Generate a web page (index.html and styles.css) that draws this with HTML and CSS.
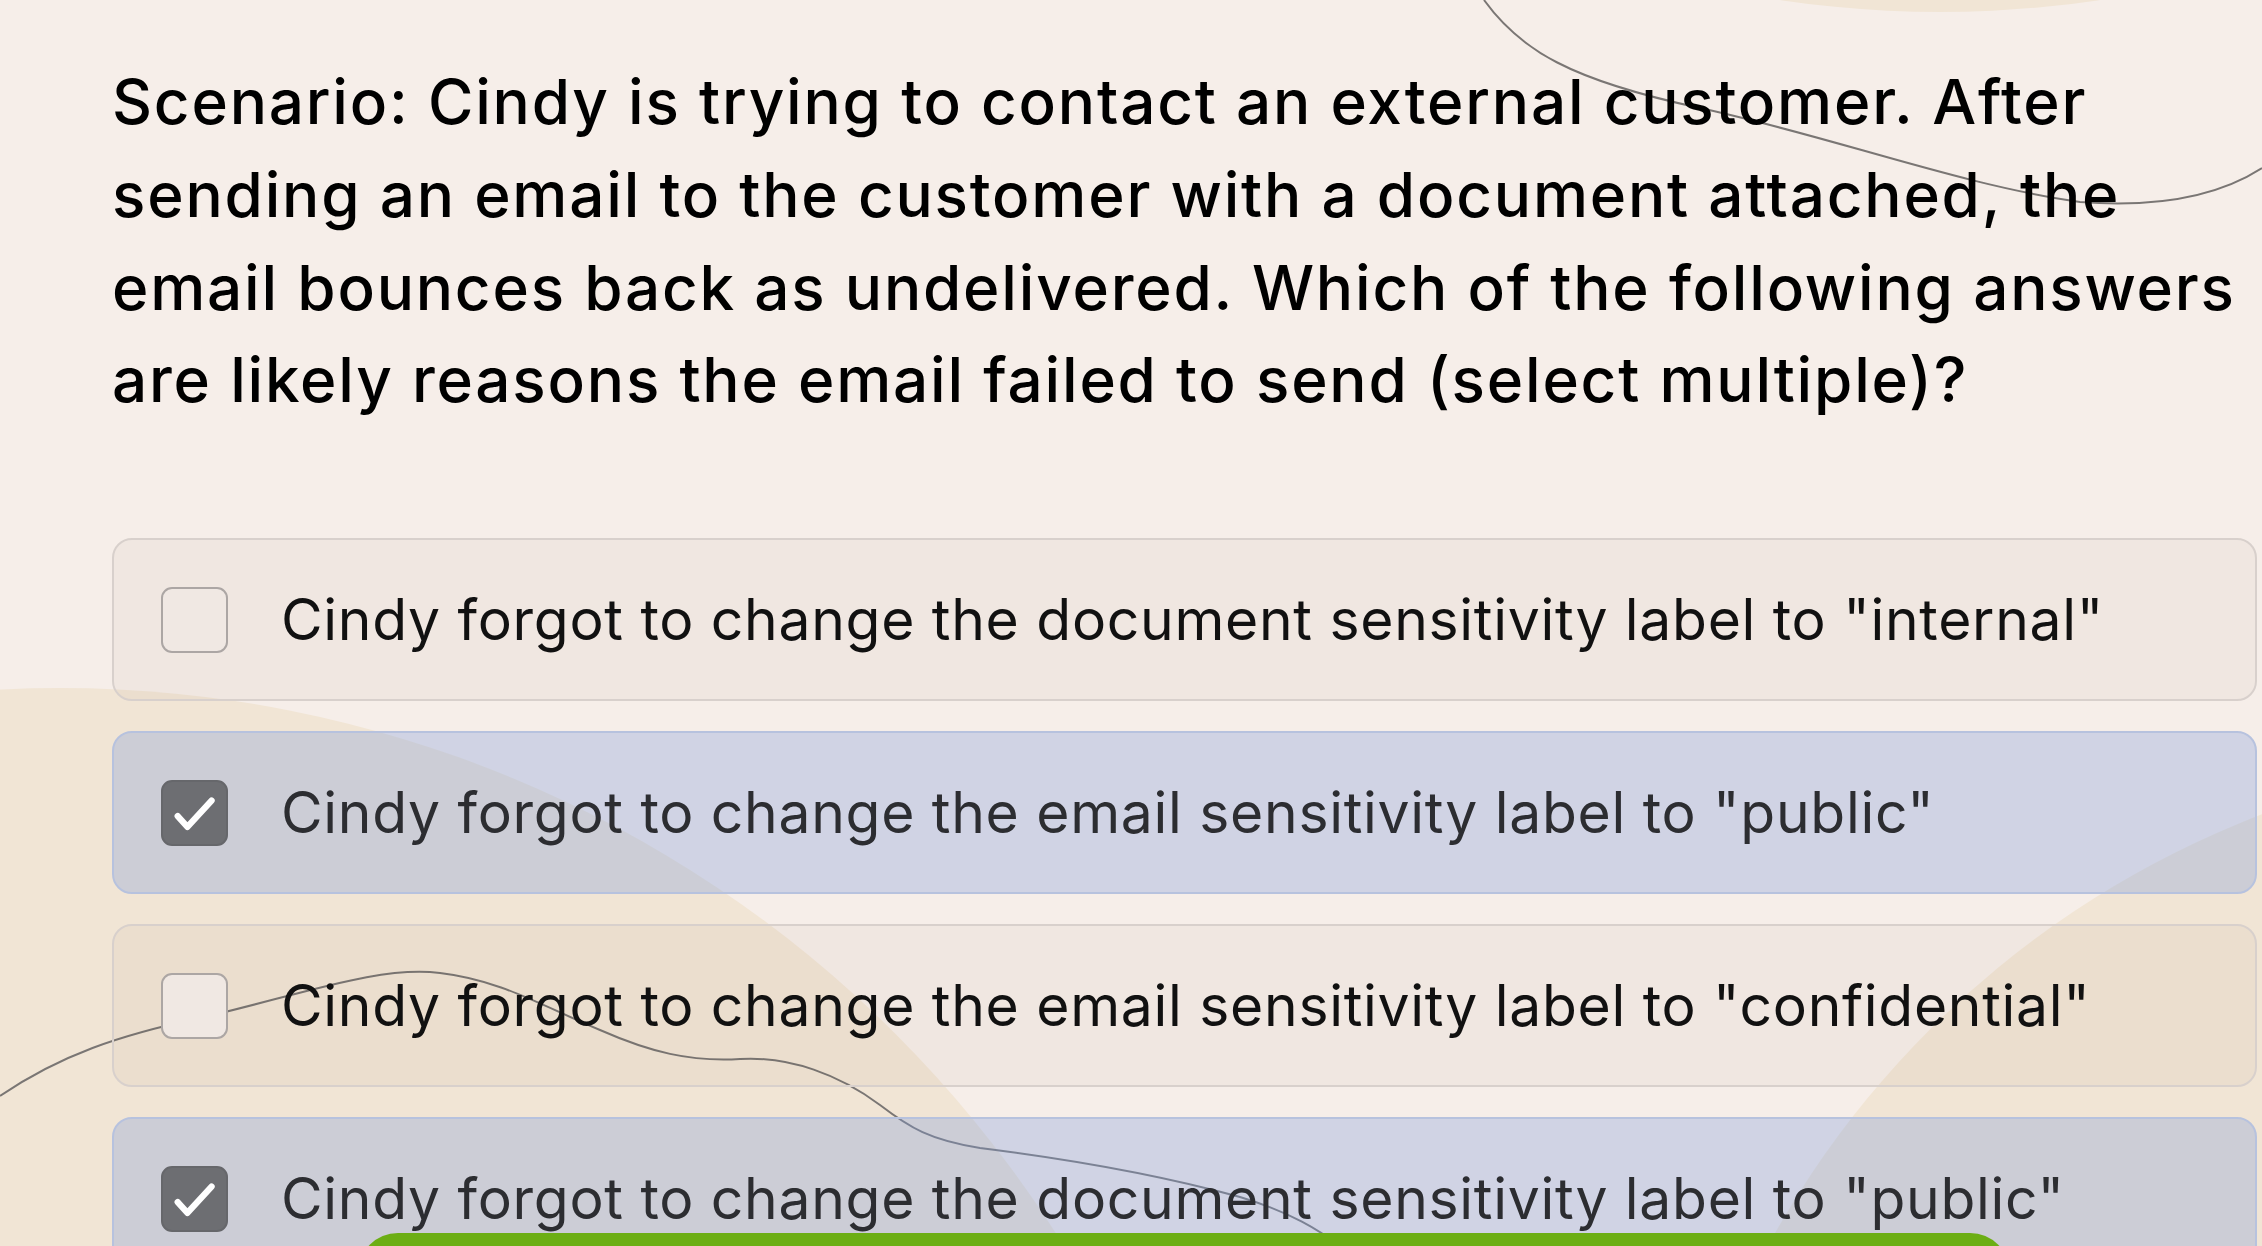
FILE: index.html
```html
<!DOCTYPE html>
<html lang="en">
<head>
<meta charset="utf-8">
<title>Scenario question</title>
<link rel="stylesheet" href="styles.css">
</head>
<body>
<svg class="backdrop" viewBox="0 0 2262 1246" aria-hidden="true">
  <circle class="blob" cx="60" cy="1870" r="1182"/>
  <circle class="blob" cx="2600" cy="1700" r="948"/>
  <circle class="blob" cx="1940" cy="-1061" r="1073"/>
  <path class="wire" d="M1484 0 C1520 50 1570 80 1700 108 C1830 136 1960 185 2080 202 C2160 208 2220 195 2262 168"/>
  <path class="wire" d="M0 1096 C60 1055 120 1035 200 1018 C300 995 380 965 440 973 C500 980 540 1005 600 1030 C650 1052 690 1062 740 1059 C790 1056 840 1075 880 1105 C910 1128 930 1140 980 1148 C1060 1158 1160 1175 1240 1197 C1290 1212 1320 1230 1345 1250"/>
</svg>
<main class="quiz">
  <h1 class="question">Scenario: Cindy is trying to contact an external customer. After sending an email to the customer with a document attached, the email bounces back as undelivered. Which of the following answers are likely reasons the email failed to send (select multiple)?</h1>
  <ul class="options">
    <li class="option">
      <span class="check"></span>
      <span class="label">Cindy forgot to change the document sensitivity label to "internal"</span>
    </li>
    <li class="option checked">
      <span class="check"><svg viewBox="0 0 24 24"><path d="M5.6 13.2 L9.3 17.3 L18.5 7.3"/></svg></span>
      <span class="label">Cindy forgot to change the email sensitivity label to "public"</span>
    </li>
    <li class="option">
      <span class="check"></span>
      <span class="label">Cindy forgot to change the email sensitivity label to "confidential"</span>
    </li>
    <li class="option checked">
      <span class="check"><svg viewBox="0 0 24 24"><path d="M5.6 13.2 L9.3 17.3 L18.5 7.3"/></svg></span>
      <span class="label">Cindy forgot to change the document sensitivity label to "public"</span>
    </li>
  </ul>
</main>
<button class="submit" type="button" aria-label="Submit"></button>
</body>
</html>
```
FILE: styles.css
```css
html, body {
  margin: 0;
  padding: 0;
}
body {
  position: relative;
  width: 2262px;
  height: 1246px;
  overflow: hidden;
  background: #f6eee9;
  font-family: Inter, "Open Sans", "DejaVu Sans", sans-serif;
  color: #000;
}
.backdrop {
  position: absolute;
  left: 0;
  top: 0;
  width: 2262px;
  height: 1246px;
  z-index: 0;
}
.blob {
  fill: #f1e5d5;
}
.wire {
  fill: none;
  stroke: #7a7674;
  stroke-width: 2;
}
.quiz {
  position: relative;
  z-index: 1;
  padding: 56px 5px 0 112px;
}
.question {
  width: 2175px;
  margin: 0;
  font-size: 62px;
  line-height: 92.8px;
  font-weight: 500;
  letter-spacing: 1.8px;
  color: #000;
}
.options {
  list-style: none;
  margin: 111px 0 0;
  padding: 0;
  display: flex;
  flex-direction: column;
  gap: 30px;
}
.option {
  box-sizing: border-box;
  height: 163px;
  display: flex;
  align-items: center;
  gap: 53px;
  padding-left: 47px;
  border: 2px solid #d8d0cc;
  border-radius: 20px;
  background: rgba(90, 50, 40, 0.035);
}
.option.checked {
  background: rgba(127, 157, 217, 0.32);
  border-color: #b7c2de;
}
.check {
  flex: none;
  box-sizing: border-box;
  width: 67px;
  height: 66px;
  border: 2px solid #aca6a4;
  border-radius: 11px;
  background: #f0e8e3;
  display: flex;
  align-items: center;
  justify-content: center;
}
.checked .check {
  background: #6d6e72;
  border-color: #66676b;
}
.check svg {
  width: 67px;
  height: 66px;
  fill: none;
  stroke: #fff;
  stroke-width: 2.4;
  stroke-linecap: round;
  stroke-linejoin: round;
}
.label {
  font-size: 57px;
  letter-spacing: 0.7px;
  color: #111;
  white-space: nowrap;
}
.checked .label {
  color: #2c2d31;
}
.submit {
  position: absolute;
  left: 358px;
  top: 1233px;
  width: 1652px;
  height: 120px;
  border: none;
  border-radius: 40px;
  background: #6cae14;
  z-index: 2;
}
```
